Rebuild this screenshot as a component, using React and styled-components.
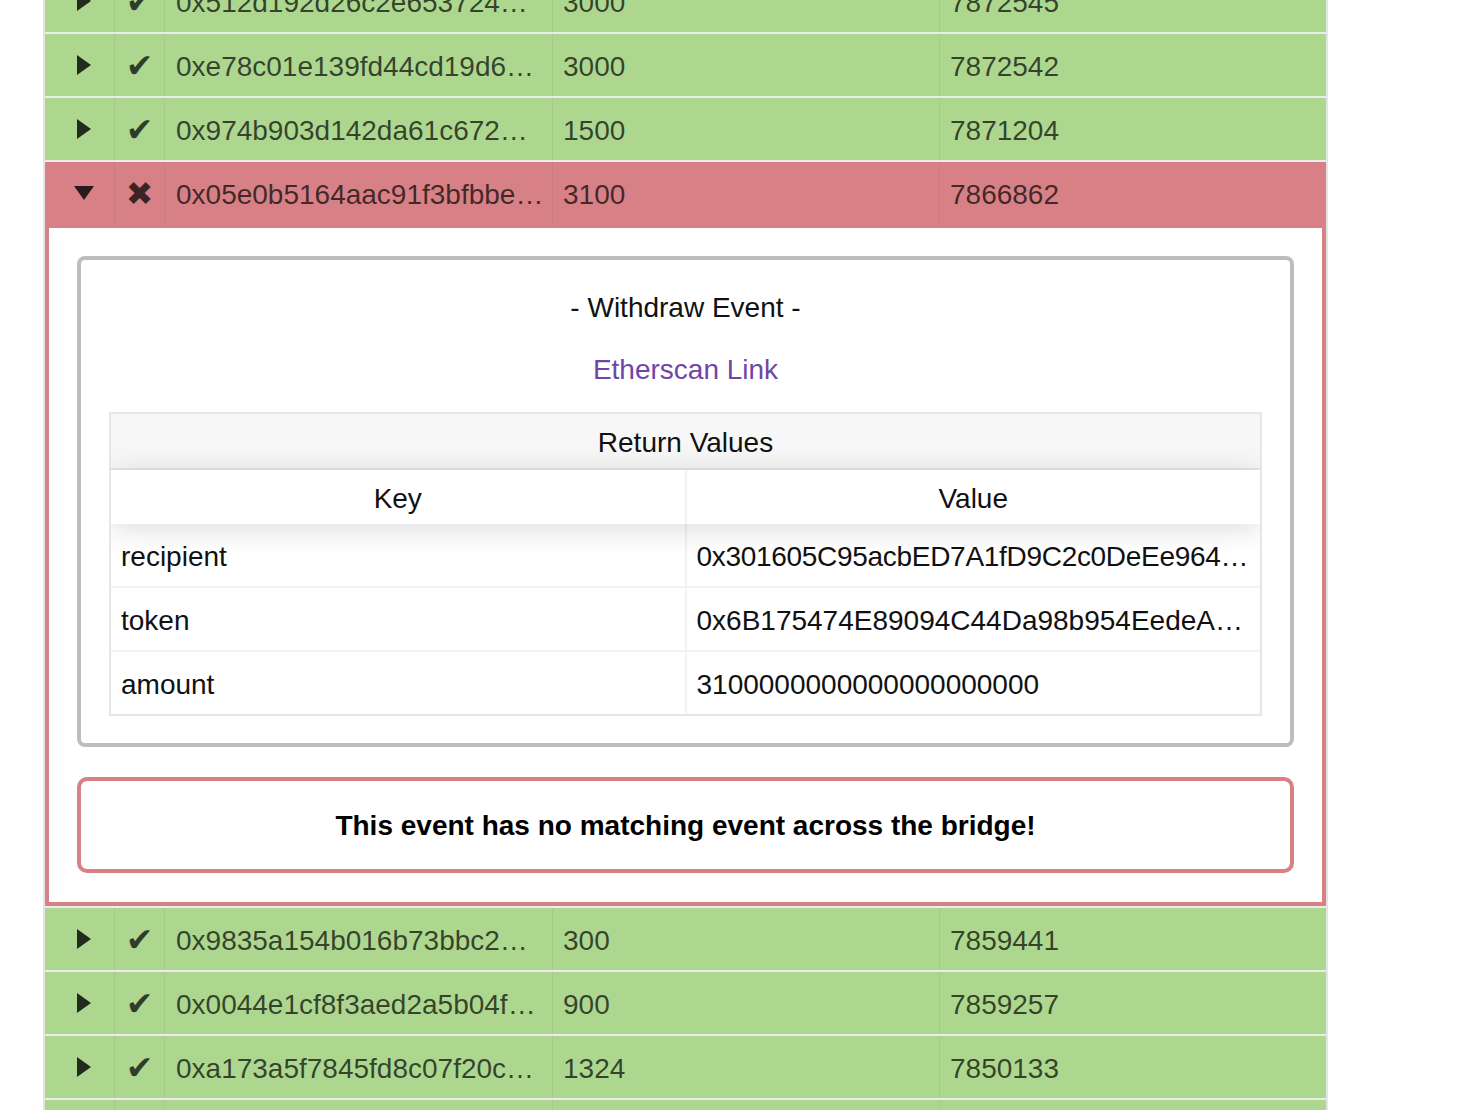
import React from "react";
import styled, { createGlobalStyle } from "styled-components";

const GREEN = "#add78f";
const RED = "#d78085";

const GlobalStyle = createGlobalStyle`
  html, body {
    margin: 0;
    background: #fff;
  }
  body {
    font-family: "Liberation Sans", Arial, Helvetica, sans-serif;
    overflow: hidden;
  }
`;

const Page = styled.div`
  height: 1110px;
  overflow: hidden;
  padding-left: 43px;
`;

const Table = styled.div`
  width: 1281px;
  margin-top: -30px;
  border: 2px solid #e4e4e4;
  border-top: 0;
  font-size: 28px;
`;

const Group = styled.div`
  border-bottom: 2px solid #ececec;
`;

const Row = styled.div`
  display: flex;
  height: 62px;
  background: ${(p) => (p.$failed ? RED : GREEN)};
  color: rgba(0, 0, 0, 0.7);
`;

const Cell = styled.div`
  flex: ${(p) => (p.$width ? `0 0 ${p.$width}px` : "1 1 0")};
  min-width: 0;
  box-sizing: border-box;
  display: flex;
  align-items: center;
  justify-content: ${(p) => (p.$center ? "center" : "flex-start")};
  padding: ${(p) => (p.$center ? 0 : 4)}px 10px 0 ${(p) => (p.$pad != null ? p.$pad : 10)}px;
  border-right: 1px solid rgba(0, 0, 0, 0.05);
  white-space: nowrap;
  overflow: hidden;

  &:last-child {
    border-right: 0;
  }
`;

const Expander = styled.span`
  width: 0;
  height: 0;
  margin-left: 8px;
  border-left: 10px solid transparent;
  border-right: 10px solid transparent;
  border-top: 14px solid rgba(0, 0, 0, 0.8);
  transform: rotate(${(p) => (p.$open ? 0 : -90)}deg);
`;

const Status = styled.span`
  font-family: "DejaVu Sans", sans-serif;
  font-size: 33px;
  line-height: 1;
  color: rgba(0, 0, 0, 0.72);
`;

const Detail = styled.div`
  display: flex;
  flex-direction: column;
  gap: 30px;
  padding: 28px 28px 29px;
  border: 4px solid ${RED};
  background: #fff;
`;

const EventBox = styled.div`
  padding: 28px 28px 27px;
  border: 4px solid #bdbdbd;
  border-radius: 8px;
  text-align: center;
  color: #111;
`;

const EventTitle = styled.div`
  line-height: 36px;
  padding-top: 2px;
  margin-bottom: 24px;
`;

const LinkLine = styled.div`
  line-height: 36px;
  padding-top: 2px;
  margin-bottom: 24px;

  a {
    color: #7145a8;
    text-decoration: none;
  }
`;

const ValuesTable = styled.div`
  border: 2px solid #e6e6e6;
  overflow: hidden;
`;

const GroupHead = styled.div`
  box-sizing: border-box;
  height: 56px;
  padding-top: 4px;
  display: flex;
  align-items: center;
  justify-content: center;
  background: #f7f7f7;
  border-bottom: 2px solid #e6e6e6;
`;

const HeadRow = styled.div`
  position: relative;
  z-index: 1;
  display: flex;
  height: 54px;
  background: #fff;
  box-shadow: 0 4px 30px 0 rgba(0, 0, 0, 0.15);
`;

const HeadCell = styled.div`
  flex: 1 1 0;
  min-width: 0;
  display: flex;
  align-items: center;
  justify-content: center;
  padding-top: 4px;
  border-right: 2px solid rgba(0, 0, 0, 0.05);

  &:last-child {
    border-right: 0;
  }
`;

const BodyRow = styled.div`
  display: flex;
  height: 62px;
  border-bottom: 2px solid rgba(0, 0, 0, 0.05);

  &:last-child {
    border-bottom: 0;
  }
`;

const BodyCell = styled.div`
  flex: 1 1 0;
  min-width: 0;
  display: flex;
  align-items: center;
  padding: 4px 10px 0;
  white-space: nowrap;
  overflow: hidden;
  letter-spacing: ${(p) => (p.$tight ? "-0.3px" : "normal")};
  border-right: 2px solid rgba(0, 0, 0, 0.05);

  &:last-child {
    border-right: 0;
  }
`;

const Warning = styled.div`
  padding: 29px 28px 27px;
  border: 4px solid ${RED};
  border-radius: 10px;
  line-height: 32px;
  text-align: center;
  font-weight: bold;
  color: #000;
`;

const transfers = [
  { hash: "0x512d192d26c2e653724…", amount: "3000", block: "7872545" },
  { hash: "0xe78c01e139fd44cd19d6…", amount: "3000", block: "7872542" },
  { hash: "0x974b903d142da61c672…", amount: "1500", block: "7871204" },
  { hash: "0x05e0b5164aac91f3bfbbe…", amount: "3100", block: "7866862", failed: true, open: true },
  { hash: "0x9835a154b016b73bbc2…", amount: "300", block: "7859441" },
  { hash: "0x0044e1cf8f3aed2a5b04f…", amount: "900", block: "7859257" },
  { hash: "0xa173a5f7845fd8c07f20c…", amount: "1324", block: "7850133" },
  { hash: "0x3c6e1d0b8a27f4e95c11…", amount: "2000", block: "7849870" },
];

const returnValues = [
  { key: "recipient", value: "0x301605C95acbED7A1fD9C2c0DeEe964…", tight: true },
  { key: "token", value: "0x6B175474E89094C44Da98b954EedeA…" },
  { key: "amount", value: "3100000000000000000000" },
];

function WithdrawDetail() {
  return (
    <Detail>
      <EventBox>
        <EventTitle>- Withdraw Event -</EventTitle>
        <LinkLine>
          <a href="#etherscan">Etherscan Link</a>
        </LinkLine>
        <ValuesTable>
          <GroupHead>Return Values</GroupHead>
          <HeadRow>
            <HeadCell>Key</HeadCell>
            <HeadCell>Value</HeadCell>
          </HeadRow>
          {returnValues.map((rv) => (
            <BodyRow key={rv.key}>
              <BodyCell>{rv.key}</BodyCell>
              <BodyCell $tight={rv.tight}>{rv.value}</BodyCell>
            </BodyRow>
          ))}
        </ValuesTable>
      </EventBox>
      <Warning>This event has no matching event across the bridge!</Warning>
    </Detail>
  );
}

export default function App() {
  return (
    <Page>
      <GlobalStyle />
      <Table>
        {transfers.map((t) => (
          <Group key={t.hash}>
            <Row $failed={t.failed}>
              <Cell $width={70} $center $pad={10}>
                <Expander $open={t.open} />
              </Cell>
              <Cell $width={50} $center>
                <Status>{t.failed ? "✖" : "✔"}</Status>
              </Cell>
              <Cell $pad={11}>{t.hash}</Cell>
              <Cell>{t.amount}</Cell>
              <Cell>{t.block}</Cell>
            </Row>
            {t.open && <WithdrawDetail />}
          </Group>
        ))}
      </Table>
    </Page>
  );
}
